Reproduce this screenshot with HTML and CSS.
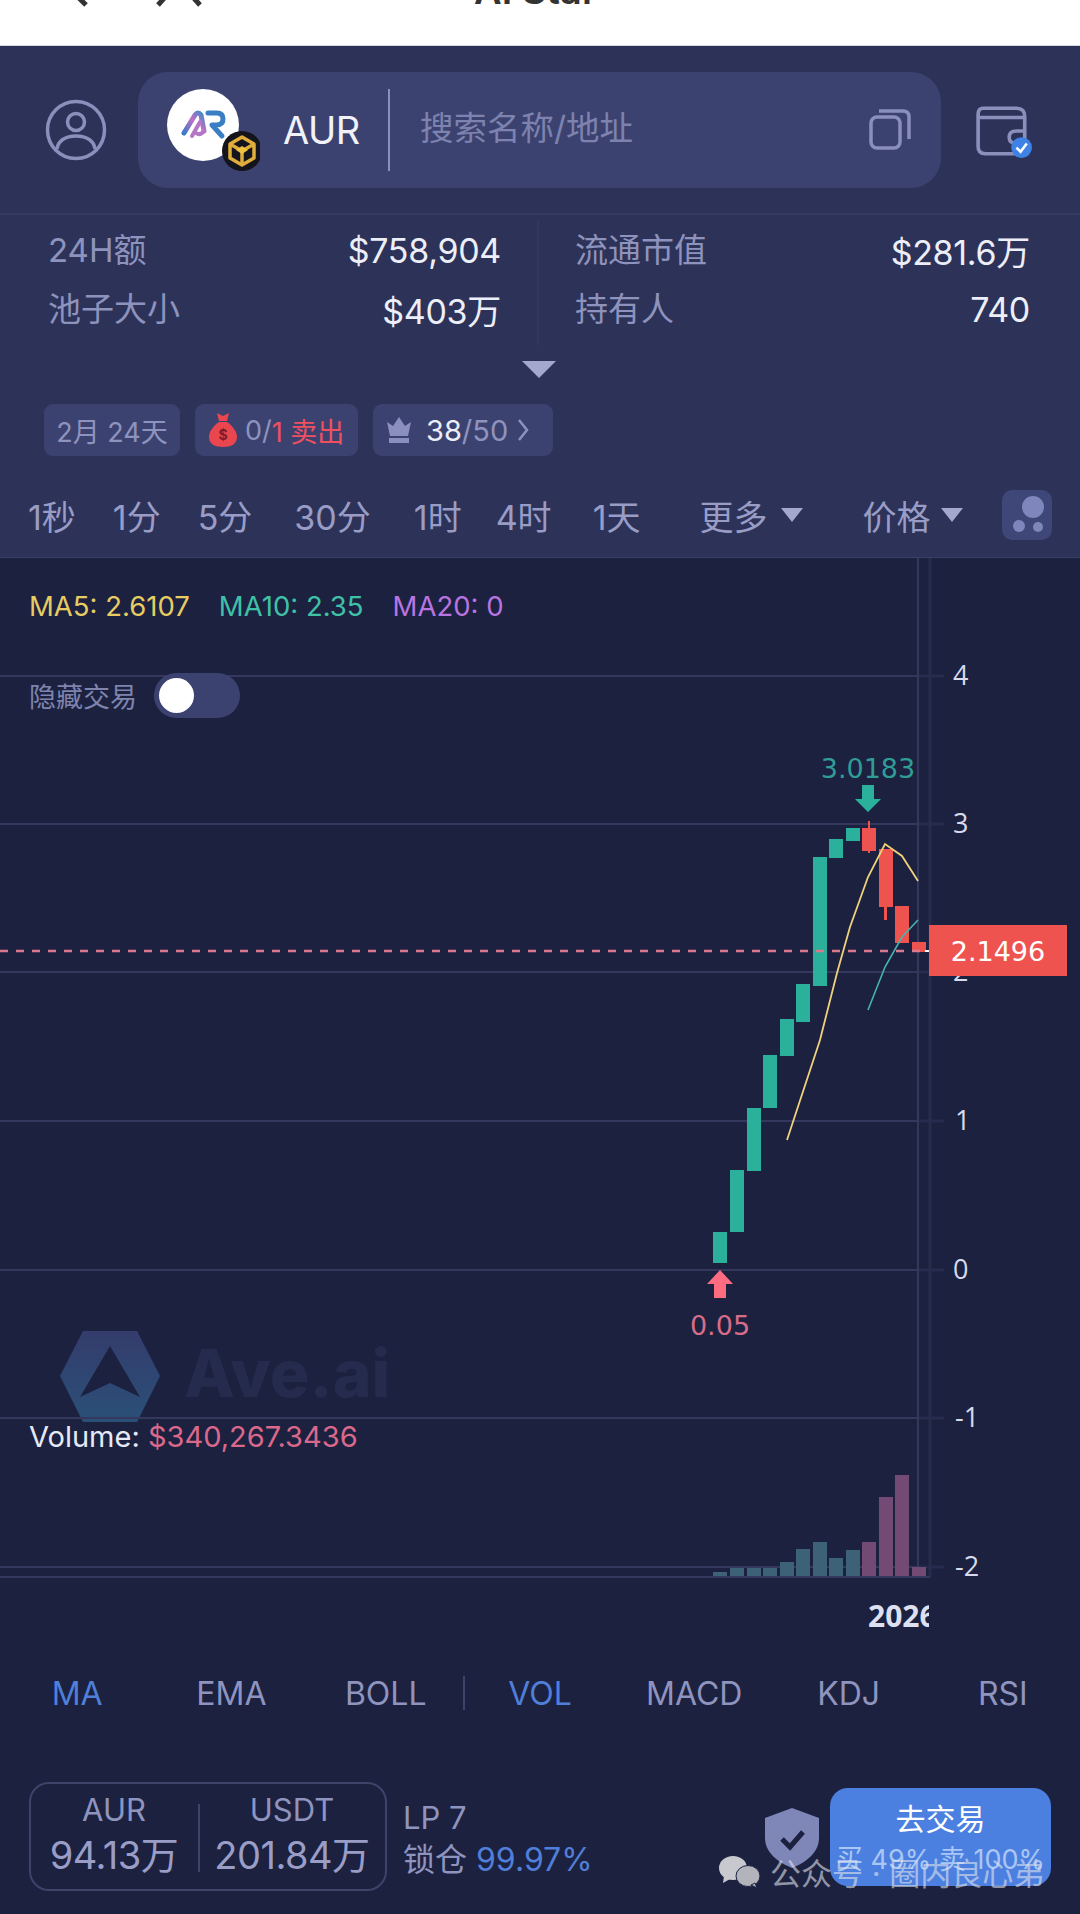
FILE: index.html
```html
<!DOCTYPE html>
<html lang="zh">
<head>
<meta charset="utf-8">
<title>AUR</title>
<link rel="stylesheet" href="styles.css">
</head>
<body>
<div class="page">
  <div class="topbar">
    <svg class="topbar-icons" width="220" height="10" viewBox="0 0 220 10"><path class="stroke-dark" d="M76 -5 L86 5 M167 -5 L158 5 M191 -5 L200 5"/></svg>
    <span class="topbar-title">AI Star</span>
  </div>

  <header class="header">
    <div class="search-row">
      <svg class="user-icon" width="62" height="62" viewBox="0 0 62 62"><circle class="icon-line" cx="31" cy="31" r="28.5"/><circle class="icon-line" cx="31" cy="23" r="8.5"/><path class="icon-line" d="M12 50 C13 42 20 37 31 37 C42 37 49 42 50 50"/></svg>
      <div class="search">
        <div class="token">
          <svg width="100" height="100" viewBox="160 80 100 100">
            <defs><linearGradient id="lg" x1="0" y1="1" x2="1" y2="0"><stop offset="0" stop-color="#3d78c9"/><stop offset=".55" stop-color="#c070c4"/><stop offset="1" stop-color="#3a8ac8"/></linearGradient></defs>
            <circle class="logo-bg" cx="203" cy="125" r="36"/>
            <path class="logo-a1" d="M184 133 L195 115 Q198 111 201 115 L204 131"/>
            <path class="logo-a2" d="M192 136 L200 122 M204 131 Q200 136 196 133"/>
            <path class="logo-r" d="M208 113 H217 Q223 113 223 119 Q223 125 216 125 H212 L222 136"/>
            <circle class="badge-bg" cx="242" cy="151" r="20"/>
            <path class="badge-cube" d="M242 137 L254 144 V158 L242 165 L230 158 V144 Z M230 144 L242 151 L254 144 M242 151 V165"/>
            <path class="badge-core" d="M242 146 L248 150 L242 154 L236 150 Z"/>
          </svg>
        </div>
        <span class="token-name">AUR</span>
        <span class="search-div"></span>
        <span class="placeholder">搜索名称/地址</span>
        <svg class="copy-icon" width="42" height="42" viewBox="0 0 42 42"><rect class="icon-line" x="2" y="9" width="29" height="31" rx="6"/><path class="icon-line" d="M10 3 H34 Q40 3 40 9 V31"/></svg>
      </div>
      <svg class="wallet-icon" width="58" height="58" viewBox="0 0 56 56">
        <path class="icon-line" d="M8 6 H40 Q48 6 48 14 V46 Q48 50 42 50 H10 Q3 50 3 43 V12 Q3 6 8 6 Z M3 15 H48"/>
        <path class="icon-line" d="M48 28 H40 Q33 28 33 34 Q33 40 40 40 H48"/>
        <circle class="check-bg" cx="45" cy="44" r="10"/>
        <path class="check" d="M40 44 L44 48 L50 40"/>
      </svg>
    </div>

    <div class="stats">
      <div class="stats-col stats-left">
        <div class="stat"><span class="stat-k">24H额</span><span class="stat-v">$758,904</span></div>
        <div class="stat"><span class="stat-k">池子大小</span><span class="stat-v">$403万</span></div>
      </div>
      <div class="stats-col stats-right">
        <div class="stat"><span class="stat-k">流通市值</span><span class="stat-v">$281.6万</span></div>
        <div class="stat"><span class="stat-k">持有人</span><span class="stat-v">740</span></div>
      </div>
    </div>

    <div class="expand"></div>

    <div class="chips">
      <div class="chip chip-age">2月 24天</div>
      <div class="chip chip-sell">
        <svg width="30" height="36" viewBox="0 0 30 36"><path class="bag" d="M9 1 L15 4 L21 1 L19 9 H11 Z M11 10 H19 C25 14 29 20 29 25 C29 32 23 35 15 35 C7 35 1 32 1 25 C1 20 5 14 11 10 Z"/><text class="bag-s" x="15" y="28">$</text></svg>
        <span>0/</span><span class="red">1 卖出</span>
      </div>
      <div class="chip chip-top">
        <svg width="28" height="28" viewBox="0 0 28 28"><path class="crown" d="M2 6 L8 10 L14 1 L20 10 L26 6 L23 20 H5 Z M4 22 H24 V27 H4 Z"/></svg>
        <span class="bright">38</span><span>/50</span>
        <svg width="12" height="24" viewBox="0 0 12 24"><path class="chev" d="M2 2 L10 12 L2 22"/></svg>
      </div>
    </div>

    <nav class="frames">
      <span class="frame f1">1秒</span>
      <span class="frame f2">1分</span>
      <span class="frame f3">5分</span>
      <span class="frame f4">30分</span>
      <span class="frame f5">1时</span>
      <span class="frame f6">4时</span>
      <span class="frame f7">1天</span>
      <span class="frame f8">更多</span><i class="caret c1"></i>
      <span class="frame f9">价格</span><i class="caret c2"></i>
      <span class="layer-btn">
        <svg width="50" height="50" viewBox="0 0 50 50"><circle class="dot" cx="31" cy="17" r="11"/><circle class="dot" cx="17" cy="36" r="6"/><circle class="dot" cx="36" cy="37" r="5"/></svg>
      </span>
    </nav>
  </header>

  <main class="chart">
    <svg class="plot" width="1080" height="1082" viewBox="0 558 1080 1082">
      <defs>
        <linearGradient id="hex" x1="0" y1="0" x2="0" y2="1"><stop offset="0" stop-color="#343c6c"/><stop offset="1" stop-color="#2a5078"/></linearGradient>
      </defs>
      <!-- watermark -->
      <path fill="url(#hex)" d="M83 1331 H137 L160 1376 L137 1422 H83 L60 1376 Z"/>
      <path class="hex-a" d="M110 1346 L140 1397 L110 1383 L80 1397 Z"/>
      <text class="wm" x="184" y="1397">Ave.ai</text>
      <!-- grid -->
      <path class="grid-far" d="M930 558 V1577 M918 676 H944 M918 824 H944 M918 972 H944 M918 1121 H944 M918 1270 H944 M918 1418 H944 M918 1567 H944"/>
      <path class="grid-main" d="M0 676 H918 M0 824 H918 M0 972 H918 M0 1121 H918 M0 1270 H918 M0 1418 H918 M0 1567 H918 M0 1577 H930 M918 558 V1577"/>
      <!-- volume -->
      <g class="vol-up">
        <rect x="713" y="1572" width="14" height="4"/><rect x="730" y="1568" width="14" height="8"/><rect x="747" y="1568" width="14" height="8"/><rect x="763" y="1568" width="14" height="8"/><rect x="780" y="1562" width="14" height="14"/><rect x="796" y="1549" width="14" height="27"/><rect x="813" y="1542" width="14" height="34"/><rect x="829" y="1558" width="14" height="18"/><rect x="846" y="1550" width="14" height="26"/>
      </g>
      <g class="vol-down">
        <rect x="862" y="1542" width="14" height="34"/><rect x="879" y="1497" width="14" height="79"/><rect x="895" y="1475" width="14" height="101"/><rect x="912" y="1567" width="14" height="9"/>
      </g>
      <!-- candles -->
      <g class="up">
        <rect x="713" y="1232" width="14" height="31"/><rect x="730" y="1170" width="14" height="62"/><rect x="747" y="1108" width="14" height="63"/><rect x="763" y="1055" width="14" height="53"/><rect x="780" y="1019" width="14" height="37"/><rect x="796" y="984" width="14" height="38"/><rect x="813" y="857" width="14" height="129"/><rect x="829" y="839" width="14" height="19"/><rect x="846" y="828" width="14" height="13"/>
      </g>
      <g class="down">
        <rect x="868" y="821" width="2" height="32"/><rect x="862" y="828" width="14" height="23"/><rect x="884" y="849" width="3" height="71"/><rect x="879" y="849" width="14" height="58"/><rect x="895" y="906" width="14" height="37"/><rect x="912" y="942" width="14" height="10"/>
      </g>
      <polyline class="ma5" points="787,1140 820,1040 837,973 850,927 868,877 885,844 902,856 918,881"/>
      <polyline class="ma10" points="868,1010 885,967 902,937 918,920"/>
      <!-- price line -->
      <path class="price-dash" d="M0 951 H925"/>
      <path class="price-tick" d="M925 951 H940"/>
      <!-- markers -->
      <text class="mark-hi" x="868" y="778">3.0183</text>
      <path class="arrow-hi" d="M862 785 H874 V799 H881 L868 812 L855 799 H862 Z"/>
      <path class="arrow-lo" d="M720 1270 L733 1284 H726 V1298 H714 V1284 H707 Z"/>
      <text class="mark-lo" x="720" y="1335">0.05</text>
      <!-- axis -->
      <g class="axis">
        <text x="953" y="685">4</text><text x="953" y="833">3</text><text x="953" y="981">2</text><text x="955" y="1130">1</text><text x="953" y="1279">0</text><text x="955" y="1427">-1</text><text x="955" y="1576">-2</text>
      </g>
      <svg x="800" y="1590" width="129" height="50" viewBox="800 1590 129 50"><text class="year" x="868" y="1627">2026</text></svg>
      <rect class="price-box" x="929" y="925" width="138" height="51"/>
      <text class="price-txt" x="998" y="961">2.1496</text>
    </svg>

    <div class="legend">
      <span class="ma-y">MA5: 2.6107</span>
      <span class="ma-g">MA10: 2.35</span>
      <span class="ma-p">MA20: 0</span>
    </div>
    <div class="hide-row">
      <span class="hide-label">隐藏交易</span>
      <span class="toggle"><i class="knob"></i></span>
    </div>
    <div class="volume"><span class="vol-k">Volume:</span> <span class="vol-v">$340,267.3436</span></div>
  </main>

  <div class="indicators">
    <span class="ind on">MA</span>
    <span class="ind">EMA</span>
    <span class="ind">BOLL</span>
    <span class="ind on split">VOL</span>
    <span class="ind">MACD</span>
    <span class="ind">KDJ</span>
    <span class="ind">RSI</span>
  </div>

  <footer class="bottom">
    <div class="pool">
      <div class="pool-col"><span class="pool-k">AUR</span><span class="pool-v">94.13万</span></div>
      <div class="pool-col pool-col-2"><span class="pool-k">USDT</span><span class="pool-v">201.84万</span></div>
    </div>
    <div class="lp">
      <span class="lp-1">LP 7</span>
      <span class="lp-2">锁仓 <b class="blue">99.97%</b></span>
    </div>
    <div class="trade">
      <span class="trade-1">去交易</span>
      <span class="trade-2">买 49% 卖 100%</span>
    </div>
    <svg class="shield" width="54" height="60" viewBox="0 0 54 60"><path class="shield-bg" d="M27 0 L54 10 V30 C54 44 42 54 27 60 C12 54 0 44 0 30 V10 Z"/><path class="shield-ck" d="M17 31 L25 39 L38 24"/></svg>
    <div class="wechat">
      <svg width="44" height="34" viewBox="0 0 44 34"><ellipse class="we" cx="15" cy="13" rx="14" ry="12"/><path class="we" d="M6 21 L5 28 L12 24 Z"/><ellipse class="we we2" cx="30" cy="21" rx="12" ry="10.5"/><path class="we we2" d="M37 28 L39 33 L33 30 Z"/></svg>
      <span>公众号 · 圈内良心弟</span>
    </div>
  </footer>
</div>
</body>
</html>
```

FILE: styles.css
```css
* { box-sizing: border-box; }
html, body { margin: 0; padding: 0; }
body { background: #1c2140; font-family: Inter, "Noto Sans CJK SC", sans-serif; }
.page { width: 1080px; height: 1914px; overflow: hidden; position: relative; }

.topbar { height: 46px; background: #fff; position: relative; overflow: hidden; border-bottom: 1px solid #d5d6dd; }
.topbar-icons { position: absolute; left: 0; top: 0; }
.stroke-dark { fill: none; stroke: #333; stroke-width: 5; }
.topbar-title { position: absolute; left: 474px; top: -33px; font-size: 38px; font-weight: 600; color: #333; white-space: nowrap; }

.header { height: 512px; background: #2d3259; border-bottom: 1px solid #393e69; }
.icon-line { fill: none; stroke: #8a8fbb; stroke-width: 3.5; }

.search-row { height: 169px; display: flex; align-items: center; padding-left: 45px; border-bottom: 2px solid #353a63; }
.search { width: 803px; height: 116px; margin-left: 31px; background: #3c4270; border-radius: 30px; display: flex; align-items: center; position: relative; }
.user-icon { flex: none; }
.token { width: 100px; height: 100px; margin-left: 22px; flex: none; }
.logo-bg { fill: #fff; }
.logo-a1 { fill: none; stroke: url(#lg); stroke-width: 5; stroke-linecap: round; stroke-linejoin: round; }
.logo-a2 { fill: none; stroke: #b676c6; stroke-width: 4; stroke-linecap: round; }
.logo-r { fill: none; stroke: #3a7fc4; stroke-width: 5; stroke-linecap: round; stroke-linejoin: round; }
.badge-bg { fill: #14141c; }
.badge-cube { fill: none; stroke: #e0ac3b; stroke-width: 3.5; stroke-linejoin: round; }
.badge-core { fill: #f0c040; }
.token-name { font-size: 38px; line-height: 46px; color: #f1f2f8; font-weight: 400; margin-left: 23px; width: 82px; letter-spacing: -.5px; }
.search-div { width: 2px; height: 82px; background: #8a8fbb; margin-left: 23px; }
.placeholder { font-size: 33.5px; line-height: 44px; margin-top: -4px; color: #7d82ae; margin-left: 30px; font-weight: 400; }
.copy-icon { position: absolute; right: 30px; top: 36px; }
.wallet-icon { margin-left: 34px; flex: none; margin-top: 2px; }
.check-bg { fill: #3e82e6; }
.check { fill: none; stroke: #fff; stroke-width: 2.5; }

.stats { height: 130px; padding-top: 6px; display: flex; }
.stats-col { display: flex; flex-direction: column; }
.stats-left { width: 539px; padding: 0 36px 0 48px; border-right: 2px solid #333862; height: 124px; }
.stats-right { width: 541px; padding: 0 50px 0 36px; }
.stat { height: 59px; display: flex; justify-content: space-between; align-items: center; font-size: 33px; }
.stat-k { color: #8e93bd; margin-bottom: 5px; }
.stat-v { color: #eceef8; font-weight: 400; font-size: 34px; letter-spacing: -.3px; }

.expand { width: 0; height: 0; margin: 16px 0 0 522px; border-left: 17px solid transparent; border-right: 17px solid transparent; border-top: 17px solid #a4a8cf; }

.chips { height: 52px; margin: 26px 0 0 44px; display: flex; gap: 15px; }
.chip { height: 52px; border-radius: 9px; background: #3c4270; color: #8e93bd; display: flex; align-items: center; font-size: 27px; }
.chip-age { width: 136px; justify-content: center; }
.chip-sell { width: 163px; padding-left: 13px; }
.chip-sell svg { margin-right: 7px; }
.chip-top { width: 180px; padding-left: 12px; font-size: 29px; }
.chip-top svg:first-child { margin-right: 13px; }
.chip-top svg:last-child { margin-left: 9px; }
.bag { fill: #e9464f; }
.bag-s { fill: #7a1c28; font-size: 14px; text-anchor: middle; font-weight: 700; }
.red { color: #ef5060; }
.crown { fill: #8a8fc0; }
.bright { color: #eceef8; }
.chev { fill: none; stroke: #8e93bd; stroke-width: 2.5; }

.frames { height: 50px; margin-top: 34px; display: flex; align-items: center; font-size: 34px; color: #999dc6; position: relative; }
.frame { display: block; }
.f1 { margin-left: 28px; }
.f2 { margin-left: 37px; }
.f3 { margin-left: 37px; }
.f4 { margin-left: 42px; }
.f5 { margin-left: 43px; }
.f6 { margin-left: 34px; }
.f7 { margin-left: 41px; }
.f8 { margin-left: 59px; }
.f9 { margin-left: 59px; }
.caret { width: 0; height: 0; border-left: 11px solid transparent; border-right: 11px solid transparent; border-top: 14px solid #a4a8cf; }
.c1 { margin-left: 14px; }
.c2 { margin-left: 11px; }
.layer-btn { position: absolute; left: 1002px; top: 0; width: 50px; height: 50px; border-radius: 10px; background: #3f4678; }
.dot { fill: #7f86bb; }

.chart { height: 1082px; background: #1c2140; position: relative; overflow: hidden; }
.plot { position: absolute; left: 0; top: 0; }
.grid-main { fill: none; stroke: #33385c; stroke-width: 2; }
.grid-far { fill: none; stroke: #272c4e; stroke-width: 3; }
.up { fill: #2bb09c; }
.down { fill: #ef5350; }
.vol-up { fill: #3d6177; }
.vol-down { fill: #734a74; }
.ma5 { fill: none; stroke: #f0d27a; stroke-width: 1.8; }
.ma10 { fill: none; stroke: #45b5ac; stroke-width: 1.6; }
.price-dash { fill: none; stroke: #d8798c; stroke-width: 2.5; stroke-dasharray: 8 8; }
.price-tick { fill: none; stroke: #fff; stroke-width: 2; }
.mark-hi { fill: #2f9d96; font-size: 27px; text-anchor: middle; font-family: "DejaVu Sans", sans-serif; }
.mark-lo { fill: #d76d88; font-size: 27px; text-anchor: middle; font-family: "DejaVu Sans", sans-serif; }
.arrow-hi { fill: #2bb09c; }
.arrow-lo { fill: #ff6b80; }
.axis text { fill: #d6daec; font-size: 27px; font-family: "Open Sans", sans-serif; }
.year { fill: #dde0f0; font-size: 30px; font-weight: 700; font-family: "Open Sans", sans-serif; }
.price-box { fill: #ef5350; }
.price-txt { fill: #fff; font-size: 27px; text-anchor: middle; font-family: "DejaVu Sans", sans-serif; }
.hex-a { fill: #1c2140; }
.wm { fill: #252b4d; font-size: 66px; font-weight: 800; font-family: Inter, sans-serif; }

.legend { position: relative; padding: 32px 0 0 29px; display: flex; gap: 29px; font-size: 27.5px; height: 64px; line-height: 32px; }
.ma-y { color: #e7cc62; }
.ma-g { color: #3fc1a8; }
.ma-p { color: #b974e0; }
.hide-row { position: relative; margin-top: 51px; padding-left: 29px; height: 45px; display: flex; align-items: center; }
.hide-label { font-size: 27px; color: #7e84ad; }
.toggle { width: 86px; height: 45px; border-radius: 23px; background: #3c4270; margin-left: 17px; position: relative; }
.knob { position: absolute; left: 5px; top: 5px; width: 35px; height: 35px; border-radius: 50%; background: #fff; }
.volume { position: absolute; left: 29px; top: 862px; font-size: 29px; line-height: 34px; }
.vol-k { color: #e6e9f6; }
.vol-v { color: #d9688a; }

.indicators { height: 106px; display: grid; grid-template-columns: repeat(7, 1fr); align-items: center; font-size: 32px; color: #8f94bf; }
.ind { text-align: center; position: relative; }
.ind.on { color: #4f7fd8; }
.split::before { content: ""; position: absolute; left: 0; top: 2px; width: 2px; height: 34px; background: #3e4369; }

.bottom { height: 166px; position: relative; padding: 36px 0 0 29px; display: flex; align-items: flex-start; }
.pool { width: 358px; height: 109px; border: 2px solid #3e4369; border-radius: 20px; display: flex; }
.pool-col { width: 166px; display: flex; flex-direction: column; align-items: center; padding-top: 6px; }
.pool-col-2 { width: 188px; border-left: 2px solid transparent; position: relative; }
.pool-col-2::before { content: ""; position: absolute; left: -1px; top: 20px; width: 2px; height: 68px; background: #3e4369; }
.pool-k { font-size: 31px; line-height: 40px; color: #8f94bf; }
.pool-v { font-size: 38px; line-height: 50px; color: #9a9ec7; letter-spacing: -.5px; white-space: nowrap; }
.lp { margin-left: 16px; padding-top: 14px; display: flex; flex-direction: column; }
.lp-1 { font-size: 31px; line-height: 44px; color: #8f94bf; }
.lp-2 { font-size: 32px; line-height: 40px; color: #8f94bf; }
.blue { font-weight: 400; color: #4f7fd8; }
.trade { position: absolute; left: 830px; top: 42px; width: 221px; height: 98px; border-radius: 18px; background: #4b80e0; display: flex; flex-direction: column; align-items: center; padding-top: 9px; }
.trade-1 { font-size: 30px; line-height: 44px; color: #fff; }
.trade-2 { font-size: 27px; line-height: 34px; color: #a9c6f5; margin-top: 2px; white-space: nowrap; }
.shield { position: absolute; left: 765px; top: 62px; }
.shield-bg { fill: #7f86b8; }
.shield-ck { fill: none; stroke: #1c2140; stroke-width: 5; }
.wechat { position: absolute; left: 718px; top: 103px; display: flex; align-items: center; gap: 8px; font-size: 31px; color: rgba(225,228,238,.62); white-space: nowrap; }
.we { fill: #c8c9cf; }
.we2 { fill: #b3b4bb; stroke: #1c2140; stroke-width: 1; }
```
